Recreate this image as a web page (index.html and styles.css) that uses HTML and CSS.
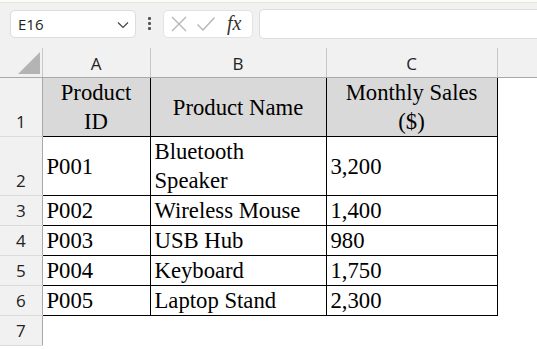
FILE: index.html
```html
<!DOCTYPE html>
<html lang="en">
<head>
  <meta charset="UTF-8">
  <title>Product Sales</title>
  <link rel="stylesheet" href="styles.css">
</head>
<body>
  <div class="ribbon-edge"></div>
  <div class="formula-bar">
    <div class="name-box">
      <span>E16</span>
      <svg class="chevron" width="12" height="8" viewBox="0 0 12 8"><path d="M1 1.5 L6 6.5 L11 1.5" fill="none" stroke="#444" stroke-width="1.2"/></svg>
    </div>
    <div class="grip"><i></i><i></i><i></i></div>
    <div class="fx-buttons">
      <svg width="18" height="18" viewBox="0 0 18 18"><path d="M2 2 L16 16 M16 2 L2 16" stroke="#b4b4b4" stroke-width="1.3"/></svg>
      <svg width="20" height="18" viewBox="0 0 20 18"><path d="M1.5 9.5 L7 15 L18.5 2.5" fill="none" stroke="#b4b4b4" stroke-width="1.3"/></svg>
      <span class="fx">fx</span>
    </div>
    <div class="formula-input"></div>
  </div>

  <table class="sheet">
    <colgroup>
      <col class="c-rh"><col class="c-a"><col class="c-b"><col class="c-c"><col>
    </colgroup>
    <thead>
      <tr class="col-heads">
        <th class="corner"><span class="tri"></span></th>
        <th>A</th><th>B</th><th>C</th><th class="next"></th>
      </tr>
    </thead>
    <tbody>
      <tr class="tall">
        <th class="rh">1</th>
        <td class="hd">Product<br>ID</td>
        <td class="hd">Product Name</td>
        <td class="hd">Monthly Sales<br>($)</td>
        <td class="empty"></td>
      </tr>
      <tr class="tall">
        <th class="rh">2</th>
        <td>P001</td>
        <td class="wrap">Bluetooth<br>Speaker</td>
        <td>3,200</td>
        <td class="empty"></td>
      </tr>
      <tr>
        <th class="rh">3</th><td>P002</td><td>Wireless Mouse</td><td>1,400</td><td class="empty"></td>
      </tr>
      <tr>
        <th class="rh">4</th><td>P003</td><td>USB Hub</td><td>980</td><td class="empty"></td>
      </tr>
      <tr>
        <th class="rh">5</th><td>P004</td><td>Keyboard</td><td>1,750</td><td class="empty"></td>
      </tr>
      <tr>
        <th class="rh">6</th><td>P005</td><td>Laptop Stand</td><td>2,300</td><td class="empty"></td>
      </tr>
      <tr>
        <th class="rh">7</th><td class="empty"></td><td class="empty"></td><td class="empty"></td><td class="empty"></td>
      </tr>
    </tbody>
  </table>
</body>
</html>
```
FILE: styles.css
```css
body {
  margin: 0;
  background: #fff;
  font-family: "Open Sans", "Noto Sans", sans-serif;
  overflow: hidden;
}
.ribbon-edge {
  height: 2px;
  background: #fbfbfb;
  border-bottom: 1px solid #e9e4d8;
}
.formula-bar {
  display: flex;
  align-items: center;
  height: 45px;
  background: #f1f1f1;
  padding-left: 10px;
  box-sizing: border-box;
  padding-bottom: 4px;
}
.name-box {
  width: 126px;
  height: 28px;
  box-sizing: border-box;
  background: #fff;
  border: 1px solid #dcdcdc;
  border-radius: 5px;
  display: flex;
  align-items: center;
  justify-content: space-between;
  padding: 0 6px 0 7px;
  font-size: 15px;
  color: #222;
}
.chevron {
  margin-top: 2px;
}
.grip {
  width: 27px;
  display: flex;
  flex-direction: column;
  align-items: center;
  gap: 2px;
}
.grip i {
  width: 3px;
  height: 3px;
  background: #555;
  border-radius: 1px;
}
.fx-buttons {
  width: 90px;
  height: 28px;
  box-sizing: border-box;
  background: #fff;
  border: 1px solid #e2e2e2;
  border-radius: 5px;
  display: flex;
  align-items: center;
  gap: 8px;
  padding-left: 6px;
}
.fx {
  font-family: "Liberation Serif", serif;
  font-style: italic;
  font-size: 20px;
  color: #333;
  margin-left: 3px;
}
.formula-input {
  flex: 1;
  height: 28px;
  margin-left: 6px;
  background: #fff;
  border: 1px solid #dcdcdc;
  border-right: none;
  border-radius: 5px 0 0 5px;
}
.sheet {
  border-collapse: collapse;
  table-layout: fixed;
  width: 537px;
}
.c-rh { width: 42px; }
.c-a { width: 108px; }
.c-b { width: 176px; }
.c-c { width: 171px; }
.col-heads th {
  height: 29px;
  padding: 0;
  background: #f1f1f1;
  font-weight: normal;
  font-size: 17px;
  color: #222;
  border-left: 1px solid #c8c8c8;
  border-bottom: 1px solid #a9a9a9;
  vertical-align: bottom;
  line-height: 26px;
}
.col-heads th.corner {
  border-left: none;
  border-right: 1px solid #c8c8c8;
  position: relative;
}
.tri {
  position: absolute;
  right: 2px;
  bottom: 3px;
  width: 0;
  height: 0;
  border-left: 22px solid transparent;
  border-bottom: 22px solid #b4b4b4;
}
.rh {
  background: #f1f1f1;
  font-weight: normal;
  font-size: 17px;
  color: #222;
  padding: 0 0 1px;
  vertical-align: bottom;
  line-height: 26px;
  border-right: 1px solid #a9a9a9;
  border-bottom: 1px solid #dadada;
}
tbody tr { height: 30px; }
tbody tr.tall { height: 58px; }
td {
  padding: 0 4px;
  font-family: "Liberation Serif", "Times New Roman", serif;
  font-size: 22.7px;
  color: #000;
  border: 1px solid #000;
  vertical-align: bottom;
  line-height: 29px;
  white-space: nowrap;
}
td.hd {
  background: #d9d9d9;
  text-align: center;
  vertical-align: middle;
}
tr.tall td { vertical-align: middle; }
td.empty {
  border: none;
}
tbody tr:last-child td.empty { border-top: 1px solid #000; }
tbody tr:last-child td.empty:last-child { border-top: none; }
```
